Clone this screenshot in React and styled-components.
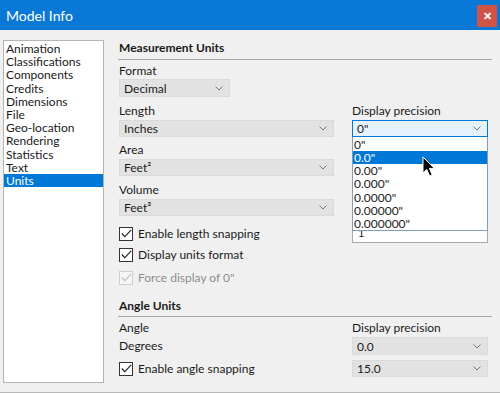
import styled, { createGlobalStyle } from "styled-components";

const GlobalStyle = createGlobalStyle`
  html, body {
    margin: 0;
    padding: 0;
    background: #f0f0f0;
  }
  * {
    box-sizing: border-box;
  }
`;

const Window = styled.div`
  width: 500px;
  height: 393px;
  background: #f0f0f0;
  font-family: Lato, "Noto Sans", sans-serif;
  font-size: 12px;
  color: #1a1a1a;
  overflow: hidden;
  display: flex;
  flex-direction: column;
  border-bottom: 1px solid #b8b8b8;
`;

const TitleBar = styled.div`
  height: 30px;
  background: #0a78d6;
  display: flex;
  align-items: center;
  justify-content: space-between;
  padding: 0 3px 0 6px;
`;

const Title = styled.span`
  color: #fff;
  font-size: 14px;
  margin-top: 1px;
`;

const CloseButton = styled.div`
  width: 20px;
  height: 22px;
  background: #cf5446;
  color: #fff;
  display: flex;
  align-items: center;
  justify-content: center;
  font-size: 11px;
  font-weight: bold;
  margin-top: 2px;
`;

const Body = styled.div`
  flex: 1;
  display: flex;
  padding: 10px 0 0 3px;
`;

const List = styled.div`
  width: 101px;
  height: 343px;
  background: #fff;
  border: 1px solid #b4b4b4;
  padding-top: 1px;
  display: flex;
  flex-direction: column;
`;

const ListItem = styled.div`
  height: 13.2px;
  line-height: 13px;
  padding-left: 2px;
  background: ${(p) => (p.selected ? "#0078d7" : "transparent")};
  color: ${(p) => (p.selected ? "#fff" : "#1a1a1a")};
`;

const Content = styled.div`
  margin-left: 15px;
  width: 373px;
  display: flex;
  flex-direction: column;
`;

const Heading = styled.div`
  font-weight: bold;
  height: 14px;
  line-height: 14px;
  margin-top: ${(p) => p.top}px;
`;

const Rule = styled.div`
  height: 1px;
  background: #a8a8a8;
  margin-top: ${(p) => p.top}px;
  margin-left: -1px;
`;

const Row = styled.div`
  display: flex;
  gap: 18px;
  margin-top: ${(p) => p.top}px;
  align-items: ${(p) => p.align || "flex-start"};
`;

const Col = styled.div`
  width: ${(p) => (p.right ? 136 : 215)}px;
  position: relative;
  display: flex;
  align-items: center;
`;

const Label = styled.div`
  height: 14px;
  line-height: 14px;
  color: ${(p) => (p.disabled ? "#8d8d8d" : "#1a1a1a")};
`;

const Combo = styled.div`
  position: relative;
  width: ${(p) => p.width || "100%"};
  height: ${(p) => p.h || 17}px;
  background: ${(p) => (p.active ? "#e5f1fb" : "#e2e2e2")};
  border: 1px solid ${(p) => (p.active ? "#0078d7" : "#dadada")};
  display: flex;
  align-items: center;
  justify-content: space-between;
  padding: 0 6px 0 4px;
`;

const Chevron = () => (
  <svg width="8" height="5" viewBox="0 0 8 5">
    <path d="M0.5 0.5 L4 4 L7.5 0.5" fill="none" stroke="#7a7a7a" strokeWidth="1" />
  </svg>
);

const DropList = styled.div`
  position: absolute;
  top: 17px;
  left: 0;
  width: 136px;
  height: 94px;
  background: #fff;
  border: 1px solid #7f9db9;
  border-top: none;
  padding-top: 1px;
  z-index: 2;
  display: flex;
  flex-direction: column;
`;

const DropItem = styled.div`
  height: 13.3px;
  line-height: 13px;
  padding-left: 1px;
  background: ${(p) => (p.selected ? "#0078d7" : "transparent")};
  color: ${(p) => (p.selected ? "#fff" : "#1a1a1a")};
`;

const TextBox = styled.div`
  width: 136px;
  height: 19px;
  background: #fff;
  border: 1px solid #a8a8a8;
  padding: 1px 5px;
  text-align: left;
  font-size: 11px;
`;

const Check = styled.label`
  display: flex;
  align-items: center;
  gap: 5px;
  color: ${(p) => (p.disabled ? "#8d8d8d" : "#1a1a1a")};
`;

const Box = styled.span`
  width: 14px;
  height: 14px;
  background: ${(p) => (p.disabled ? "#f5f5f5" : "#fff")};
  border: 1px solid ${(p) => (p.disabled ? "#cfcfcf" : "#333")};
  display: flex;
  align-items: center;
  justify-content: center;
`;

const Tick = ({ color }) => (
  <svg width="11" height="9" viewBox="0 0 11 9">
    <path d="M0.8 4.5 L3.8 7.6 L10.2 0.8" fill="none" stroke={color} strokeWidth="1.1" />
  </svg>
);

const Cursor = styled.svg`
  position: absolute;
  left: 70px;
  top: 36px;
  z-index: 3;
`;

const CheckBox = ({ label, disabled }) => (
  <Check disabled={disabled}>
    <Box disabled={disabled}>
      <Tick color={disabled ? "#bdbdbd" : "#222"} />
    </Box>
    {label}
  </Check>
);

const items = [
  "Animation",
  "Classifications",
  "Components",
  "Credits",
  "Dimensions",
  "File",
  "Geo-location",
  "Rendering",
  "Statistics",
  "Text",
  "Units",
];

const precisions = ['0"', '0.0"', '0.00"', '0.000"', '0.0000"', '0.00000"', '0.000000"'];

const App = () => {
  return (
    <Window>
      <GlobalStyle />
      <TitleBar>
        <Title>Model Info</Title>
        <CloseButton>✕</CloseButton>
      </TitleBar>
      <Body>
        <List>
          {items.map((item) => (
            <ListItem key={item} selected={item === "Units"}>
              {item}
            </ListItem>
          ))}
        </List>
        <Content>
          <Heading top={1}>Measurement Units</Heading>
          <Rule top={4} />
          <Row top={4}>
            <Col>
              <Label>Format</Label>
            </Col>
          </Row>
          <Row top={1}>
            <Col>
              <Combo width="111px" h={18}>
                Decimal <Chevron />
              </Combo>
            </Col>
          </Row>
          <Row top={7}>
            <Col>
              <Label>Length</Label>
            </Col>
            <Col right>
              <Label>Display precision</Label>
            </Col>
          </Row>
          <Row top={2}>
            <Col>
              <Combo>
                Inches <Chevron />
              </Combo>
            </Col>
            <Col right>
              <Combo active>
                0" <Chevron />
              </Combo>
              <DropList>
                {precisions.map((p) => (
                  <DropItem key={p} selected={p === '0.0"'}>
                    {p}
                  </DropItem>
                ))}
              </DropList>
              <Cursor width="14" height="22" viewBox="0 0 14 22">
                <path
                  d="M1 1 L1 17 L4.8 13.4 L7.6 20 L10.2 18.9 L7.4 12.4 L12.4 12.4 Z"
                  fill="#000"
                  stroke="#fff"
                  strokeWidth="1"
                  strokeLinejoin="round"
                />
              </Cursor>
            </Col>
          </Row>
          <Row top={6}>
            <Col>
              <Label>Area</Label>
            </Col>
          </Row>
          <Row top={2}>
            <Col>
              <Combo>
                Feet² <Chevron />
              </Combo>
            </Col>
          </Row>
          <Row top={7}>
            <Col>
              <Label>Volume</Label>
            </Col>
          </Row>
          <Row top={2}>
            <Col>
              <Combo>
                Feet³ <Chevron />
              </Combo>
            </Col>
          </Row>
          <Row top={8} align="center">
            <Col>
              <CheckBox label="Enable length snapping" />
            </Col>
            <Col right>
              <TextBox>1</TextBox>
            </Col>
          </Row>
          <Row top={4}>
            <Col>
              <CheckBox label="Display units format" />
            </Col>
          </Row>
          <Row top={8}>
            <Col>
              <CheckBox label='Force display of 0"' disabled />
            </Col>
          </Row>
          <Heading top={14}>Angle Units</Heading>
          <Rule top={3} />
          <Row top={4}>
            <Col>
              <Label>Angle</Label>
            </Col>
            <Col right>
              <Label>Display precision</Label>
            </Col>
          </Row>
          <Row top={2} align="center">
            <Col>
              <Label>Degrees</Label>
            </Col>
            <Col right>
              <Combo h={18}>
                0.0 <Chevron />
              </Combo>
            </Col>
          </Row>
          <Row top={5} align="center">
            <Col>
              <CheckBox label="Enable angle snapping" />
            </Col>
            <Col right>
              <Combo>
                15.0 <Chevron />
              </Combo>
            </Col>
          </Row>
        </Content>
      </Body>
    </Window>
  );
};

export default App;
